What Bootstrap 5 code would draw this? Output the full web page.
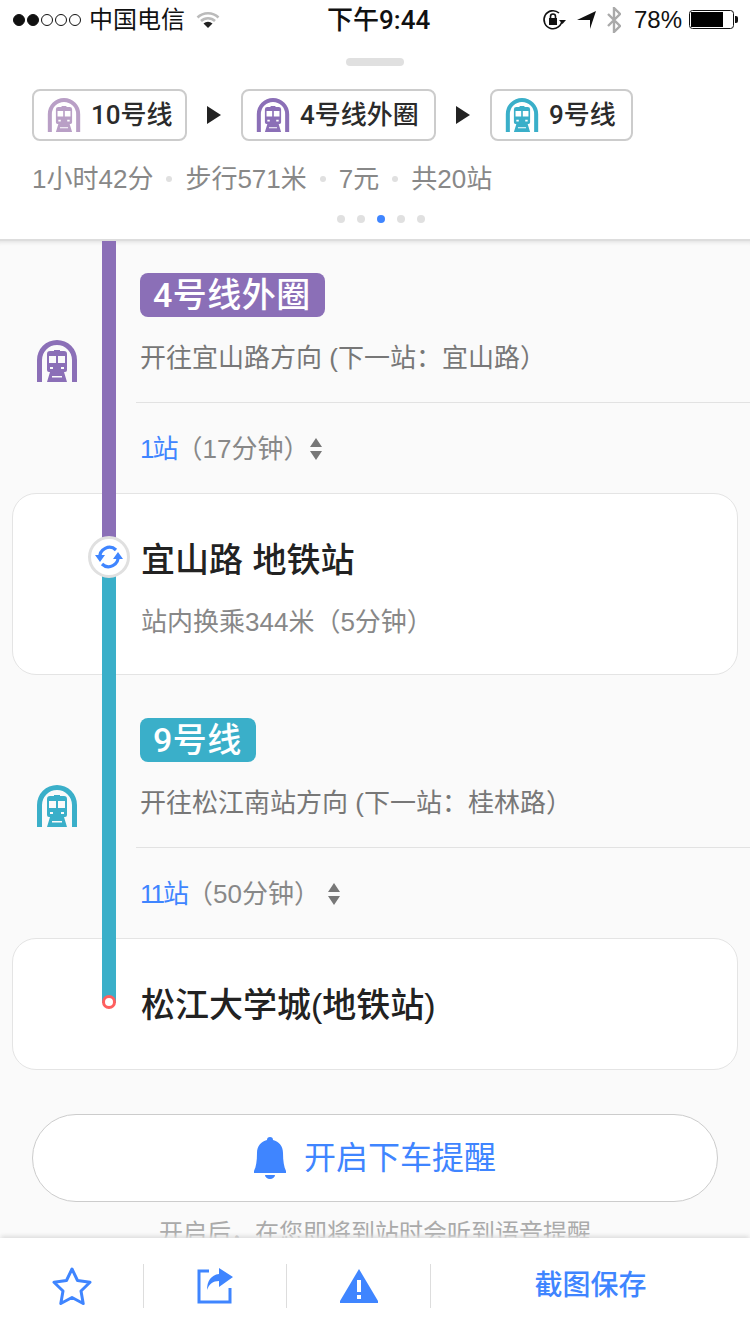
<!DOCTYPE html>
<html lang="zh">
<head>
  <meta charset="UTF-8">
  <meta name="viewport" content="width=device-width, initial-scale=1">
  <title>换乘详情</title>
  <link href="https://cdn.jsdelivr.net/npm/bootstrap@5.3.2/dist/css/bootstrap.min.css" rel="stylesheet">
  <style>
    body {
      width: 750px;
      height: 1334px;
      overflow: hidden;
      background: #fff;
      font-family: "Liberation Sans", "Noto Sans CJK SC", sans-serif;
      color: #222;
    }
    .status-bar {
      height: 40px;
      padding: 0 11px 0 13px;
      font-size: 24px;
      line-height: 40px;
      color: #111;
      position: relative;
    }
    .status-time {
      position: absolute;
      left: 327px;
      top: 0;
      font-family: Roboto, "Noto Sans CJK SC", sans-serif;
      font-size: 26px;
      font-weight: 500;
    }
    .sig-dot {
      width: 12px;
      height: 12px;
      border-radius: 50%;
      border: 1px solid #111;
      margin-right: 2px;
    }
    .sig-dot.on { background: #111; }
    .carrier { margin-left: 6px; }
    .wifi-icon { margin-left: 11px; }
    .arrow-icon { margin-left: 11px; }
    .bt-icon { margin-left: 11px; }
    .batt-text { margin-left: 13px; font-size: 24px; }
    .batt-icon { margin-left: 7px; }
    .route-head {
      height: 201px;
      border-bottom: 2px solid #ddd;
      padding: 18px 32px 0;
    }
    .grab {
      width: 58px;
      height: 8px;
      border-radius: 4px;
      background: #e0e0e0;
      margin: 0 0 23px 314px;
    }
    .chip {
      height: 52px;
      border: 2px solid #ccc;
      border-radius: 8px;
      padding: 0 0 0 13px;
      font-family: Roboto, "Noto Sans CJK SC", sans-serif;
      font-size: 26px;
      font-weight: 500;
      color: #2b2b2b;
      gap: 10px;
    }
    .chip-first { width: 155px; }
    .chip-second { width: 195px; }
    .chip-third { width: 143px; }
    .tri {
      width: 0;
      height: 0;
      border-left: 14px solid #222;
      border-top: 9px solid transparent;
      border-bottom: 9px solid transparent;
      margin: 0 20px;
    }
    .summary {
      font-size: 26px;
      color: #888;
      height: 38px;
      line-height: 38px;
      margin-top: 19px;
    }
    .sum-sep {
      width: 6px;
      height: 6px;
      border-radius: 50%;
      background: #e0e0e0;
      margin: 0 13px;
    }
    .pager { gap: 12px; margin: 17px 0 0 305px; }
    .pager i {
      width: 8px;
      height: 8px;
      border-radius: 50%;
      background: #e0e0e0;
    }
    .pager i.on { background: #3f85ff; }
    .trip {
      height: 997px;
      background: #fafafa;
      overflow: hidden;
      position: relative;
      box-shadow: inset 0 5px 4px -4px #ddd;
    }
    .rail {
      position: absolute;
      left: 102px;
      width: 14px;
    }
    .rail-purple { top: 0; height: 300px; background: #8b6fb7; }
    .rail-teal { top: 334px; height: 428px; background: #3aafc9; }
    .transfer-dot {
      position: absolute;
      left: 88px;
      top: 295px;
      width: 42px;
      height: 42px;
      border-radius: 50%;
      background: #fff;
      border: 3px solid #e0e0e0;
    }
    .end-dot {
      position: absolute;
      left: 102px;
      top: 754px;
      width: 14px;
      height: 14px;
      border-radius: 50%;
      background: #fff;
      border: 3px solid #ff5f5f;
    }
    .leg { height: 252px; padding-top: 32px; position: relative; }
    .leg-second { height: 263px; padding-top: 43px; }
    .leg-icon { position: absolute; left: 37px; top: 99px; }
    .leg-second .leg-icon { top: 110px; }
    .leg-second .leg-count svg { margin-left: 7px; }
    .leg-badge {
      display: inline-block;
      margin-left: 140px;
      height: 44px;
      line-height: 44px;
      padding: 0 14px 0 13px;
      border-radius: 8px;
      color: #fff;
      font-family: Roboto, "Noto Sans CJK SC", sans-serif;
      font-size: 34px;
      font-weight: 500;
      letter-spacing: .5px;
    }
    .leg-dir {
      margin: 21px 0 0 140px;
      font-size: 26px;
      line-height: 40px;
      color: #777;
    }
    .leg-rule {
      margin: 24px 0 0 136px;
      border-top: 1px solid #e2e2e2;
    }
    .leg-count {
      margin: 27px 0 0 140px;
      font-size: 26px;
      line-height: 38px;
      color: #888;
    }
    .leg-count b { font-weight: 400; color: #3f85ff; letter-spacing: -2px; }
    .stop-box {
      margin: 0 12px;
      border: 1px solid #e4e4e4;
      border-radius: 24px;
      background: #fff;
      padding-left: 128px;
    }
    .stop-tall { height: 182px; padding-top: 44px; }
    .stop-short { height: 132px; padding-top: 44px; }
    .stop-name { font-size: 34px; font-weight: 500; line-height: 44px; color: #222; }
    .stop-sub { font-size: 26px; line-height: 38px; color: #888; margin-top: 21px; }
    .notify {
      width: 686px;
      height: 88px;
      margin: 44px 0 0 32px;
      border: 1px solid #ccc;
      background: #fff;
      color: #3f85ff;
      font-size: 32px;
      gap: 18px;
    }
    .notify-note {
      margin-top: 14px;
      text-align: center;
      font-size: 24px;
      line-height: 34px;
      color: #aaa;
    }
    .tool-bar {
      height: 96px;
      background: #fff;
      position: relative;
      box-shadow: 0 -3px 4px -1px #ddd;
    }
    .tool-cell { height: 44px; border-right: 1px solid #ddd; }
    .tool-save {
      font-size: 28px;
      font-weight: 500;
      color: #3f85ff;
    }
  </style>
</head>
<body>

  <svg width="0" height="0" class="d-block position-absolute">
    <symbol id="train" viewBox="0 0 40 42">
      <path fill="currentColor" d="M0 42V20a20 20 0 0 1 40 0v22h-5V20a15 15 0 0 0-30 0v22z"/>
      <path fill="currentColor" fill-rule="evenodd" d="M17 10h6v1h4a3 3 0 0 1 3 3v16a2 2 0 0 1-2 2h-1l3 10H10l3-10h-1a2 2 0 0 1-2-2V14a3 3 0 0 1 3-3h4zM12 16v7h7v-7zM21 16v7h7v-7zM13 27v2h3v-2zM24 27v2h3v-2zM15 36v1.500h10V36z"/>
    </symbol>
  </svg>

  <div class="status-bar d-flex align-items-center">
    <span class="sig-dot on"></span><span class="sig-dot on"></span><span class="sig-dot"></span><span class="sig-dot"></span><span class="sig-dot"></span>
    <span class="carrier">中国电信</span>
    <svg class="wifi-icon" width="24" height="18" viewBox="0 0 24 18">
      <path fill="none" stroke="#bbb" stroke-width="2.500" d="M1.500 6.500a15 15 0 0 1 21 0M5 10a10 10 0 0 1 14 0"/>
      <path fill="#222" d="M7.500 12.500a7 7 0 0 1 9 0L12 17z"/>
    </svg>
    <span class="status-time">下午9:44</span>
    <div class="ms-auto d-flex align-items-center">
      <svg width="24" height="22" viewBox="0 0 24 22">
        <path fill="none" stroke="#111" stroke-width="1.600" d="M20 11a9 9 0 1 1-3-7"/>
        <path fill="#111" d="M17 11h7l-3.500 4zM7 9h8v7H7z"/>
        <path fill="none" stroke="#111" stroke-width="1.600" d="M8.500 9V7.500a2.500 2.500 0 0 1 5 0V9"/>
      </svg>
      <svg class="arrow-icon" width="19" height="19" viewBox="0 0 19 19"><path fill="#111" d="M0 9 19 0 13 18V9z"/></svg>
      <svg class="bt-icon" width="14" height="26" viewBox="0 0 14 26"><path fill="none" stroke="#aaa" stroke-width="2.400" d="M1 7l12 12-6 6V1l6 6L1 19"/></svg>
      <span class="batt-text">78%</span>
      <svg class="batt-icon" width="50" height="20" viewBox="0 0 50 20">
        <rect x=".5" y=".5" width="44" height="18" rx="3" fill="#fff" stroke="#111"/>
        <rect x="2" y="2" width="32" height="15" fill="#000"/>
        <path fill="#111" d="M46 6h1a2 2 0 0 1 2 2v3a2 2 0 0 1-2 2h-1z"/>
      </svg>
    </div>
  </div>

  <div class="route-head">
    <div class="grab"></div>
    <div class="d-flex align-items-center">
      <div class="chip chip-first d-flex align-items-center">
        <svg width="34" height="34" style="color:#b99fc6"><use href="#train"/></svg>10号线
      </div>
      <div class="tri"></div>
      <div class="chip chip-second d-flex align-items-center">
        <svg width="34" height="34" style="color:#8b6fb7"><use href="#train"/></svg>4号线外圈
      </div>
      <div class="tri"></div>
      <div class="chip chip-third d-flex align-items-center">
        <svg width="34" height="34" style="color:#3aafc9"><use href="#train"/></svg>9号线
      </div>
    </div>
    <div class="summary d-flex align-items-center">
      <span>1小时42分</span><span class="sum-sep"></span><span>步行571米</span><span class="sum-sep"></span><span>7元</span><span class="sum-sep"></span><span>共20站</span>
    </div>
    <div class="pager d-flex"><i></i><i></i><i class="on"></i><i></i><i></i></div>
  </div>

  <div class="trip">
    <div class="leg">
      <svg class="leg-icon" width="40" height="42" style="color:#8b6fb7"><use href="#train"/></svg>
      <span class="leg-badge" style="background:#8b6fb7">4号线外圈</span>
      <div class="leg-dir">开往宜山路方向 (下一站：宜山路）</div>
      <div class="leg-rule"></div>
      <div class="leg-count d-flex align-items-center">
        <span><b>1站</b>（17分钟）</span>
        <svg width="14" height="24" viewBox="0 0 14 24"><path fill="#777" d="M7 1l6 9H1zM7 23l-6-9h12z"/></svg>
      </div>
    </div>

    <div class="stop-box stop-tall card d-block">
      <div class="stop-name">宜山路 地铁站</div>
      <div class="stop-sub">站内换乘344米（5分钟）</div>
    </div>

    <div class="leg leg-second">
      <svg class="leg-icon" style="color:#3aafc9" width="40" height="42"><use href="#train"/></svg>
      <span class="leg-badge" style="background:#3aafc9">9号线</span>
      <div class="leg-dir">开往松江南站方向 (下一站：桂林路）</div>
      <div class="leg-rule"></div>
      <div class="leg-count d-flex align-items-center">
        <span><b>11站</b>（50分钟）</span>
        <svg width="14" height="24" viewBox="0 0 14 24"><path fill="#777" d="M7 1l6 9H1zM7 23l-6-9h12z"/></svg>
      </div>
    </div>

    <div class="stop-box stop-short card d-block">
      <div class="stop-name">松江大学城(地铁站)</div>
    </div>

    <button type="button" class="btn notify rounded-pill d-flex align-items-center justify-content-center">
      <svg width="32" height="42" viewBox="0 0 32 42">
        <path fill="#3f85ff" d="M16 0a3 3 0 0 1 3 3c6 1.500 10 6 10 13 0 8 1 14 3 18v2H0v-2c2-4 3-10 3-18C3 9 7 4.500 13 3a3 3 0 0 1 3-3zM11 38h10a5 4 0 0 1-10 0z"/>
      </svg>
      <span>开启下车提醒</span>
    </button>
    <div class="notify-note">开启后，在您即将到站时会听到语音提醒</div>

    <div class="rail rail-purple"></div>
    <div class="rail rail-teal"></div>
    <div class="transfer-dot d-flex align-items-center justify-content-center">
      <svg width="28" height="28" viewBox="0 0 28 28">
        <path fill="none" stroke="#3f85ff" stroke-width="3.200" d="M5 15A9.500 9.500 0 0 1 21 7M23 13A9.500 9.500 0 0 1 7 21"/>
        <path fill="#3f85ff" d="M0 12h10l-5 7zM18 16h10l-5-7z"/>
      </svg>
    </div>
    <div class="end-dot"></div>
  </div>

  <div class="tool-bar d-flex align-items-center">
    <div class="tool-cell d-flex align-items-center justify-content-center" style="width:144px">
      <svg width="40" height="38" viewBox="0 0 40 38">
        <path fill="none" stroke="#3f85ff" stroke-width="3" stroke-linejoin="round" d="M20 2l5.500 11.500 12.500 1.700-9 8.800 2.200 12.500L20 30.500 8.800 36.500 11 24l-9-8.800 12.500-1.700z"/>
      </svg>
    </div>
    <div class="tool-cell d-flex align-items-center justify-content-center" style="width:143px">
      <svg width="36" height="36" viewBox="0 0 36 36">
        <path fill="none" stroke="#3f85ff" stroke-width="3" d="M12 3H2v31h31V20"/>
        <path fill="#3f85ff" d="M22 0l14 9-14 10v-6c-6 0-10 3-12 9 0-9 4-15 12-16z"/>
      </svg>
    </div>
    <div class="tool-cell d-flex align-items-center justify-content-center" style="width:144px">
      <svg width="38" height="34" viewBox="0 0 38 34">
        <path fill="#3f85ff" d="M19 0l19 32a1 1 0 0 1-1 2H1a1 1 0 0 1-1-2z"/>
        <path fill="#fff" d="M17 11h4v12h-4zM17 26h4v4h-4z"/>
      </svg>
    </div>
    <div class="tool-save flex-grow-1 text-center">截图保存</div>
  </div>

</body>
</html>
